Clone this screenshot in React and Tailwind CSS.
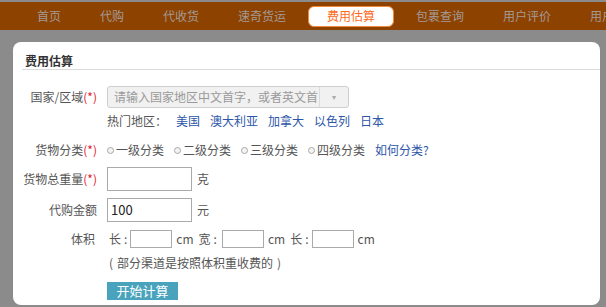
import React from 'react'

const navItems = ['首页', '代购', '代收货', '速奇货运']
const navItems2 = ['包裹查询', '用户评价', '用户']

function Divider() {
  return <span className="w-px h-[14px] bg-[#a2653a]" />
}

function Radio({ label }) {
  return (
    <span className="flex items-center mr-[10px]">
      <span className="w-[7px] h-[7px] rounded-full border border-[#a8a8a8] bg-[#f4f4f4] mr-[2px]" />
      <span>{label}</span>
    </span>
  )
}

function Label({ children, required }) {
  return (
    <span className="w-[75px] shrink-0 text-right">
      {children}
      {required && <span className="text-[#e8202a]">(*)</span>}
    </span>
  )
}

export default function App() {
  return (
    <div className="w-[606px] h-[307px] overflow-hidden bg-[#8b8b8b] text-[12px] leading-[16px] text-[#555] font-['Noto_Sans_CJK_SC',sans-serif]">
      <div className="h-[2px]" />
      {/* Nav */}
      <nav className="h-[28px] bg-[#8d4200] flex items-center pl-[15px] text-[#a39a96] whitespace-nowrap overflow-hidden">
        {navItems.map((item) => (
          <React.Fragment key={item}>
            <span className="pl-[22px] pr-[17px]">{item}</span>
            <Divider />
          </React.Fragment>
        ))}
        <span className="ml-[5px] h-[21px] px-[18px] flex items-center bg-white rounded-[6px] border border-[#f08a3a] text-[#ff6a1a]">
          费用估算
        </span>
        {navItems2.map((item, i) => (
          <React.Fragment key={item}>
            <span className="pl-[22px] pr-[17px]">{item}</span>
            {i < navItems2.length - 1 && <Divider />}
          </React.Fragment>
        ))}
      </nav>

      {/* Panel */}
      <div className="mt-[12px] ml-[13px] w-[587px] h-[263px] bg-white rounded-[8px] pt-[11px] pl-[9px]">
        <div className="h-[17px] border-b border-[#dcdcdc] pl-[3px] font-bold text-[#333]">费用估算</div>

        <div className="mt-[16px] flex items-center h-[22px]">
          <Label required>国家/区域</Label>
          <div className="ml-[10px] w-[242px] h-[22px] flex border border-[#cfcfcf] rounded-[3px] bg-[#f1f1f1]">
            <span className="flex-1 pl-[6px] flex items-center text-[#9a9a9a] overflow-hidden whitespace-nowrap">
              请输入国家地区中文首字，或者英文首
            </span>
            <span className="w-[29px] border-l border-[#dcdcdc] flex items-center justify-center text-[#aaa] text-[8px]">
              ▾
            </span>
          </div>
        </div>

        <div className="mt-[5px] pl-[85px] flex items-center h-[16px]">
          <span className="w-[69px]">热门地区：</span>
          <span className="flex gap-[10px] text-[#2d56a8]">
            <span>美国</span>
            <span>澳大利亚</span>
            <span>加拿大</span>
            <span>以色列</span>
            <span>日本</span>
          </span>
        </div>

        <div className="mt-[13px] flex items-center h-[16px]">
          <Label required>货物分类</Label>
          <div className="ml-[10px] flex items-center">
            <Radio label="一级分类" />
            <Radio label="二级分类" />
            <Radio label="三级分类" />
            <Radio label="四级分类" />
            <span className="text-[#2d56a8]">如何分类?</span>
          </div>
        </div>

        <div className="mt-[9px] flex items-center h-[24px]">
          <Label required>货物总重量</Label>
          <div className="ml-[10px] w-[85px] h-[24px] border border-[#aaa]" />
          <span className="ml-[5px]">克</span>
        </div>

        <div className="mt-[7px] flex items-center h-[24px]">
          <Label>代购金额</Label>
          <div className="ml-[10px] w-[85px] h-[24px] border border-[#aaa] pl-[3px] flex items-center text-[13px] text-[#222]">100</div>
          <span className="ml-[5px]">元</span>
        </div>

        <div className="mt-[8px] flex items-center h-[18px]">
          <span className="w-[73px] shrink-0 text-right">体积</span>
          <span className="ml-[14px]">长</span>
          <span className="ml-[3px]">:</span>
          <div className="ml-[3px] w-[42px] h-[18px] border border-[#aaa]" />
          <span className="ml-[4px]">cm</span>
          <span className="ml-[5px]">宽</span>
          <span className="ml-[3px]">:</span>
          <div className="ml-[5px] w-[42px] h-[18px] border border-[#aaa]" />
          <span className="ml-[4px]">cm</span>
          <span className="ml-[5px]">长</span>
          <span className="ml-[3px]">:</span>
          <div className="ml-[3px] w-[42px] h-[18px] border border-[#aaa]" />
          <span className="ml-[4px]">cm</span>
        </div>

        <div className="mt-[7px] pl-[87px] flex gap-[4px]">
          <span>(</span>
          <span>部分渠道是按照体积重收费的</span>
          <span>)</span>
        </div>

        <div className="mt-[11px] ml-[85px] w-[71px] h-[18px] bg-[#4aa3bc] text-white text-[13px] flex items-center justify-center">
          开始计算
        </div>
      </div>
    </div>
  )
}
